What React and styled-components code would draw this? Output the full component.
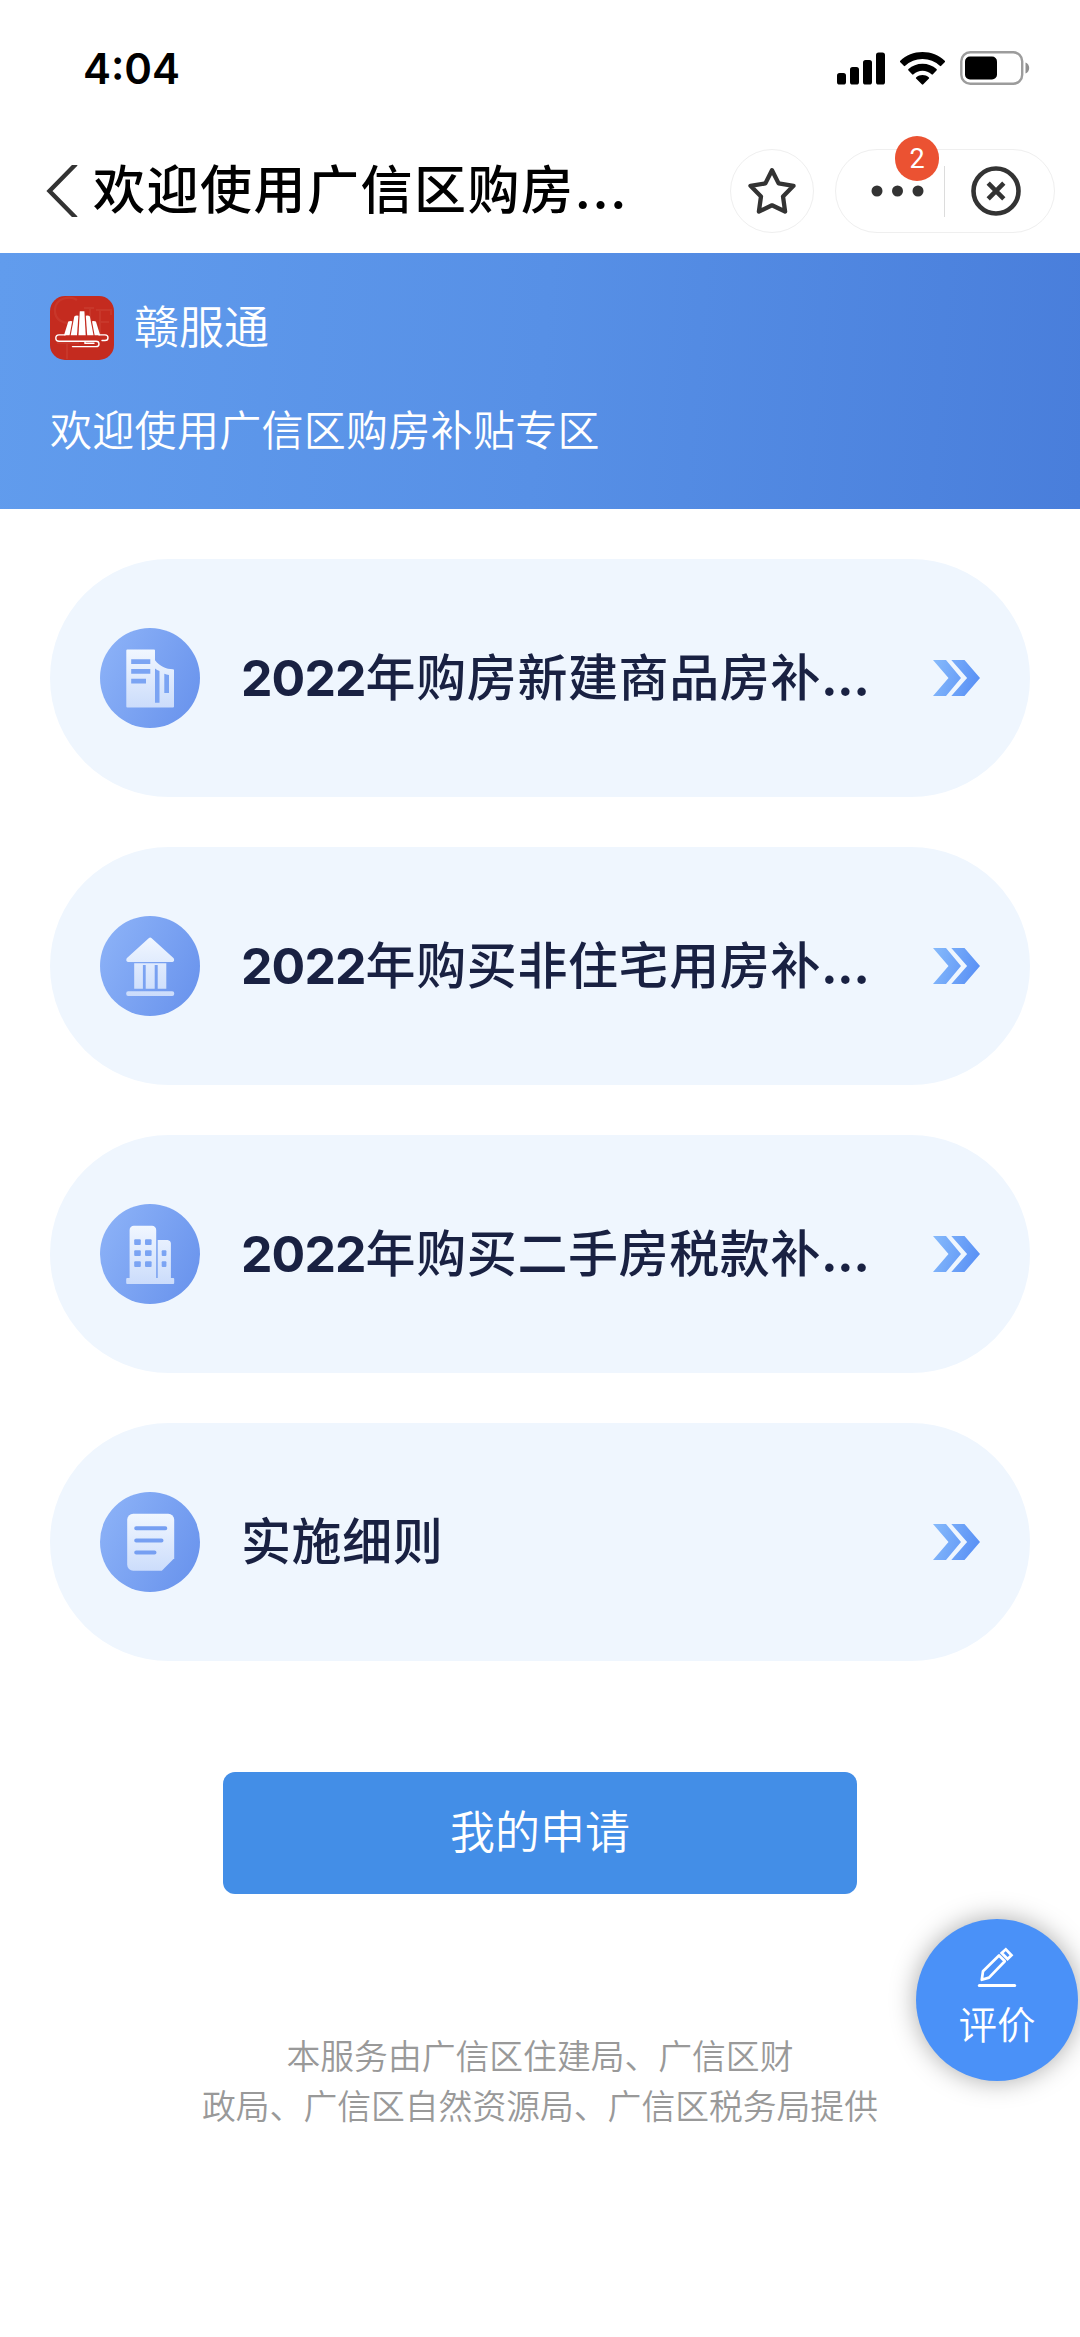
import React from 'react';
import styled, { createGlobalStyle } from 'styled-components';

const GlobalStyle = createGlobalStyle`
  * { box-sizing: border-box; }
  html, body { margin: 0; background: #fff; }
  body { font-family: Inter, "Noto Sans CJK SC", sans-serif; }
  button { font-family: inherit; border: 0; padding: 0; background: none; cursor: pointer; }
  svg { display: block; flex: none; }
`;

const Screen = styled.div`
  position: relative;
  width: 1080px;
  height: 2337px;
  overflow: hidden;
  background: #fff;
`;

const StatusBar = styled.div`
  height: 136px;
  padding: 0 50px 0 83px;
  display: flex;
  align-items: center;
  justify-content: space-between;
`;

const Clock = styled.time`
  padding-top: 2px;
  font-size: 42px;
  font-weight: 600;
  line-height: 50px;
  color: #000;
`;

const StatusIcons = styled.div`
  display: flex;
  align-items: center;
  gap: 15px;
`;

const NavBar = styled.nav`
  height: 117px;
  padding: 0 25px 7px 46px;
  display: flex;
  align-items: center;
`;

const BackButton = styled.button`
  width: 47px;
  display: flex;
`;

const NavTitle = styled.h1`
  margin: 0;
  flex: 1;
  display: flex;
  font-size: 52px;
  font-weight: 500;
  line-height: 76px;
  letter-spacing: 1.5px;
  color: #000;
  white-space: nowrap;
`;

const Ellipsis = styled.span`
  font-family: Inter, sans-serif;
  font-weight: ${(p) => p.$weight};
  letter-spacing: ${(p) => p.$tracking};
`;

const RoundButton = styled.button`
  width: 84px;
  height: 84px;
  border: 1px solid #efefef;
  border-radius: 42px;
  display: flex;
  align-items: center;
  justify-content: center;
`;

const Capsule = styled.div`
  width: 220px;
  height: 84px;
  margin-left: 21px;
  border: 1px solid #efefef;
  border-radius: 42px;
  display: flex;
  align-items: center;
`;

const CapsuleButton = styled.button`
  position: relative;
  width: ${(p) => p.$width};
  height: 82px;
  display: flex;
  align-items: center;
  justify-content: center;
  padding-left: ${(p) => p.$inset || '0'};
  padding-right: ${(p) => p.$outset || '0'};
`;

const CapsuleDivider = styled.span`
  width: 1px;
  height: 51px;
  background: #dcdcdc;
`;

const Badge = styled.span`
  position: absolute;
  top: -14px;
  right: 5px;
  width: 44px;
  height: 45px;
  border-radius: 22px;
  background: #eb5232;
  color: #fff;
  font-family: Roboto, sans-serif;
  font-size: 27px;
  line-height: 47px;
  text-align: center;
`;

const Banner = styled.header`
  height: 256px;
  padding: 43px 50px 0;
  background: linear-gradient(95deg, #619ced 0%, #5790e6 50%, #497edb 100%);
  color: #fff;
`;

const Brand = styled.div`
  height: 64px;
  display: flex;
  align-items: center;
  gap: 20px;
  font-size: 45px;
  font-weight: 350;
  line-height: 64px;
`;

const BannerText = styled.p`
  margin: 39px 0 0;
  font-size: 42px;
  font-weight: 350;
  line-height: 64px;
  letter-spacing: 0.3px;
`;

const CardList = styled.main`
  padding: 50px 50px 0;
  display: flex;
  flex-direction: column;
  gap: 50px;
`;

const Card = styled.section`
  height: 238px;
  border-radius: 119px;
  background: #eff6fe;
  padding: 0 50px;
  display: flex;
  align-items: center;
`;

const CardTitle = styled.h2`
  margin: 0 0 1px 41px;
  flex: 1;
  font-size: 50px;
  font-weight: 500;
  line-height: 70px;
  letter-spacing: 0.6px;
  color: #192142;
  white-space: nowrap;
`;

const Year = styled.span`
  font-weight: 700;
  letter-spacing: ${(p) => p.$tracking};
`;

const ApplyButton = styled.button`
  display: block;
  width: 634px;
  height: 122px;
  margin: 111px auto 0;
  border-radius: 12px;
  background: #438ee7;
  color: #fff;
  font-size: 45px;
  font-weight: 350;
  line-height: 122px;
`;

const Footer = styled.footer`
  margin-top: 138px;
  color: #999;
  font-size: 33.8px;
  font-weight: 350;
  line-height: 50px;
  text-align: center;
`;

const ReviewButton = styled.button`
  position: absolute;
  left: 916px;
  top: 1919px;
  width: 162px;
  height: 162px;
  border-radius: 50%;
  background: #4a91f8;
  box-shadow: 0 0 26px rgba(0, 0, 0, 0.34);
  color: #fff;
  display: flex;
  flex-direction: column;
  align-items: center;
  gap: 9px;
  padding-top: 28px;
  font-size: 38.5px;
  font-weight: 350;
  line-height: 56px;
`;

const SignalIcon = () => (
  <svg width="48" height="33" viewBox="0 0 48 33">
    <rect x="0" y="21" width="9" height="11.5" rx="2.6" />
    <rect x="13" y="15" width="9" height="17.5" rx="2.6" />
    <rect x="26" y="8" width="9" height="24.5" rx="2.6" />
    <rect x="39" y="0.5" width="9" height="32" rx="2.6" />
  </svg>
);

const WifiIcon = () => (
  <svg width="45" height="33" viewBox="0 0 45 33">
    <path d="M22.5 0C31.1 0 38.900 3.3 44.700 8.700a1 1 0 0 1 0 1.500l-3.500 3.600a1 1 0 0 1-1.400 0A25 25 0 0 0 22.500 7A25 25 0 0 0 5.200 13.800a1 1 0 0 1-1.400 0L.3 10.200a1 1 0 0 1 0-1.500C6.100 3.300 13.900 0 22.500 0Z" />
    <path d="M22.500 11.700c5.400 0 10.300 2 14 5.400a1 1 0 0 1 0 1.500L32.900 22.300a1 1 0 0 1-1.400 0a13.200 13.200 0 0 0-18 0a1 1 0 0 1-1.400 0L8.500 18.600a1 1 0 0 1 0-1.500c3.700-3.400 8.600-5.400 14-5.400Z" />
    <path d="M22.500 23.100c2.400 0 4.500.8 6.200 2.200a1 1 0 0 1 0 1.500l-5.400 5.500a1 1 0 0 1-1.500 0l-5.500-5.500a1 1 0 0 1 0-1.500c1.700-1.400 3.800-2.200 6.200-2.200Z" />
  </svg>
);

const BatteryIcon = () => (
  <svg width="70" height="34" viewBox="0 0 70 34">
    <rect x="1.300" y="1.300" width="60.900" height="31.400" rx="9" fill="none" stroke="#9c9c9c" strokeWidth="2.400" />
    <path d="M65.500 11.500c2.200.8 3.700 2.900 3.700 5.500s-1.500 4.700-3.700 5.500Z" fill="#8f8f8f" />
    <rect x="5" y="5.500" width="32" height="23" rx="5" />
  </svg>
);

const BackIcon = () => (
  <svg width="33" height="52" viewBox="0 0 33 52">
    <path d="M30 -1L3.500 26L30 53" fill="none" stroke="#333" strokeWidth="4.400" />
  </svg>
);

const StarIcon = () => (
  <svg width="50" height="50" viewBox="0 0 50 50" fill="none" stroke="#333" strokeWidth="4.300" strokeLinejoin="round">
    <path d="M25 4.200L31.600 17.400L46.500 19.800L36 30.400L38.100 45.500L25 39.300L11.900 45.500L14 30.400L3.500 19.800L18.400 17.400Z" />
  </svg>
);

const MoreIcon = () => (
  <svg width="53" height="12" viewBox="0 0 53 12" fill="#333">
    <circle cx="6" cy="6" r="5.500" />
    <circle cx="26.500" cy="6" r="5.500" />
    <circle cx="47" cy="6" r="5.500" />
  </svg>
);

const CloseIcon = () => (
  <svg width="50" height="50" viewBox="0 0 50 50" fill="none" stroke="#333" strokeWidth="4.600">
    <circle cx="25" cy="25" r="22.500" />
    <path d="M17.200 17.200L32.800 32.800M32.800 17.200L17.200 32.800" />
  </svg>
);

const LogoIcon = () => (
  <svg width="64" height="64" viewBox="0 0 64 64">
    <rect width="64" height="64" rx="15" fill="#c42b1f" />
    <g fill="none" stroke="#d0493c" strokeWidth="2.200" opacity="0.4">
      <path d="M27 4C20 -1 6 2 5 13s9 16 19 13" />
      <path d="M34 12h10M40 12v22M50 14v24M46 14h15v5M50 26h9M7 47h22M17 47v16" />
    </g>
    <g fill="#fff">
      <path d="M29.800 15.200h4.600l1.300 24.100h-7.200Z" />
      <path d="M24.300 20.500q1.500-1.500 4.100-.8L27 39.300h-6.300Z" />
      <path d="M39.900 20.500q-1.500-1.500-4.100-.8L37.200 39.300h6.300Z" />
      <path d="M18.300 25.600q1.600-1.200 3.900-.4L19.600 39.300h-5.600Z" />
      <path d="M45.900 25.600q-1.600-1.200-3.900-.4L44.600 39.300h5.600Z" />
    </g>
    <path
      d="M15 38.900H9a3.200 3.200 0 0 0 0 6.400H46c4 0 4 5.300 0 5.300H22.500M49 38.900h6c4 0 4 5.600 0 5.600H52M35 45.300v1.900h9"
      fill="none"
      stroke="#fff"
      strokeWidth="1.400"
      strokeLinecap="round"
    />
  </svg>
);

const DiscIcon = ({ id, children }) => (
  <svg width="100" height="100" viewBox="0 0 100 100">
    <defs>
      <linearGradient id={`${id}-disc`} x1="0" y1="0.250" x2="1" y2="0.750">
        <stop offset="0" stopColor="#8bb1f7" />
        <stop offset="1" stopColor="#6a94ed" />
      </linearGradient>
      <linearGradient id={`${id}-shape`} gradientUnits="userSpaceOnUse" x1="0" y1="21" x2="0" y2="80">
        <stop offset="0" stopColor="#f1f7ff" />
        <stop offset="1" stopColor="#cbdcfb" />
      </linearGradient>
    </defs>
    <circle cx="50" cy="50" r="50" fill={`url(#${id}-disc)`} />
    {children(`url(#${id}-shape)`)}
  </svg>
);

const OfficeIcon = () => (
  <DiscIcon id="office">
    {(fill) => (
      <>
        <path d="M27.300 21.500H54a1 1 0 0 1 1 1V32.200C60 38.500 66 41 73 41.200a1 1 0 0 1 1 1V78.500a1 1 0 0 1-1 1H27.300a1 1 0 0 1-1-1V22.500a1 1 0 0 1 1-1Z" fill={fill} />
        <path d="M31.200 31.300H50.300V35.900H31.200ZM31.200 41H50.300V45.700H31.200ZM31.200 50.700H46V55.400H31.200ZM55 40.500Q57 42 59.500 43V74.700H55ZM64.300 45.700Q66.500 46.700 69 47V65H64.300Z" fill="#7ba4f3" />
      </>
    )}
  </DiscIcon>
);

const HallIcon = () => (
  <DiscIcon id="hall">
    {(fill) => (
      <g fill={fill}>
        <path d="M48.700 22.200Q50.200 20.800 51.700 22.200L73.700 42.200Q75 45.500 72.500 45.900H28Q25.400 45.500 26.700 42.200Z" />
        <path d="M34.200 47.300H66.300V72.800H57.700V49H54.700V72.800H45.700V49H42.900V72.800H34.200Z" />
        <rect x="26.200" y="75.300" width="48" height="4.600" rx="2" />
      </g>
    )}
  </DiscIcon>
);

const TowerIcon = () => (
  <DiscIcon id="tower">
    {(fill) => (
      <>
        <path d="M33.800 21.700H52a4.200 4.200 0 0 1 4.200 4.200V74H57.700V35.900H67.500Q70.900 36.500 70.900 39.500V74H73.200a1 1 0 0 1 1 1V79a1 1 0 0 1-1 1H27.200a1 1 0 0 1-1-1V75a1 1 0 0 1 1-1H29.600V25.900a4.200 4.200 0 0 1 4.200-4.200Z" fill={fill} />
        <g fill="#7ba4f3">
          {[35.300, 46.300, 57.300].map((y) => (
            <React.Fragment key={y}>
              <rect x="34.200" y={y} width="6.600" height="5.700" rx="1" />
              <rect x="45" y={y} width="6.600" height="5.700" rx="1" />
              {y > 40 && <rect x="61.700" y={y} width="4.700" height="5.700" rx="1" />}
            </React.Fragment>
          ))}
        </g>
      </>
    )}
  </DiscIcon>
);

const DocumentIcon = () => (
  <DiscIcon id="document">
    {(fill) => (
      <>
        <path d="M33.200 21.800H68.200a6 6 0 0 1 6 6V66.200L61.800 78.800H33.200a6 6 0 0 1-6-6V27.800a6 6 0 0 1 6-6Z" fill={fill} />
        <path d="M36.200 36.300H65.300M36.200 48.400H61.500M36.200 60.400H54.500" fill="none" stroke="#769ff2" strokeWidth="4" strokeLinecap="round" />
      </>
    )}
  </DiscIcon>
);

const ChevronsIcon = ({ id }) => (
  <svg width="48" height="36" viewBox="0 0 48 36">
    <defs>
      <linearGradient id={id} gradientUnits="userSpaceOnUse" x1="0" y1="10" x2="48" y2="24">
        <stop offset="0" stopColor="#85b9fb" />
        <stop offset="1" stopColor="#588ff5" />
      </linearGradient>
    </defs>
    <path d="M1 0H14L29 18L14 36H1L16.500 18ZM19.300 0H32.500L48 18L32.500 36H19.300L35.100 18Z" fill={`url(#${id})`} />
  </svg>
);

const PencilIcon = () => (
  <svg width="40" height="41" viewBox="0 0 40 41" fill="none" stroke="#fff" strokeWidth="2.700">
    <path d="M4.800 32.800L6 24.200L22 8.500L27.800 14.300L12 30.600Z" strokeLinejoin="round" />
    <path d="M24.700 6L28.800 2.300L34.500 8.300L30.600 12Z" />
    <path d="M2.300 38.500H37.700" strokeLinecap="round" strokeWidth="3" />
  </svg>
);

const services = [
  { id: 'new', icon: OfficeIcon, year: '2022', title: '年购房新建商品房补', clipped: true },
  { id: 'commercial', icon: HallIcon, year: '2022', title: '年购买非住宅用房补', clipped: true },
  { id: 'resale', icon: TowerIcon, year: '2022', title: '年购买二手房税款补', clipped: true },
  { id: 'rules', icon: DocumentIcon, title: '实施细则' },
];

export default function App() {
  return (
    <Screen>
      <GlobalStyle />
      <StatusBar>
        <Clock>4:04</Clock>
        <StatusIcons>
          <SignalIcon />
          <WifiIcon />
          <BatteryIcon />
        </StatusIcons>
      </StatusBar>
      <NavBar>
        <BackButton aria-label="返回"><BackIcon /></BackButton>
        <NavTitle>
          欢迎使用广信区购房<Ellipsis $weight={600} $tracking="1.2px">...</Ellipsis>
        </NavTitle>
        <RoundButton aria-label="收藏"><StarIcon /></RoundButton>
        <Capsule>
          <CapsuleButton aria-label="更多" $width="108px" $inset="14px">
            <MoreIcon />
            <Badge>2</Badge>
          </CapsuleButton>
          <CapsuleDivider />
          <CapsuleButton aria-label="关闭" $width="109px" $outset="8px"><CloseIcon /></CapsuleButton>
        </Capsule>
      </NavBar>
      <Banner>
        <Brand>
          <LogoIcon />
          赣服通
        </Brand>
        <BannerText>欢迎使用广信区购房补贴专区</BannerText>
      </Banner>
      <CardList>
        {services.map(({ id, icon: Icon, year, title, clipped }) => (
          <Card key={id}>
            <Icon />
            <CardTitle>
              {year && <Year $tracking="-0.9px">{year}</Year>}
              {title}
              {clipped && <Ellipsis $weight={700} $tracking="-0.6px">...</Ellipsis>}
            </CardTitle>
            <ChevronsIcon id={`${id}-chevrons`} />
          </Card>
        ))}
      </CardList>
      <ApplyButton>我的申请</ApplyButton>
      <Footer>
        本服务由广信区住建局、广信区财
        <br />
        政局、广信区自然资源局、广信区税务局提供
      </Footer>
      <ReviewButton>
        <PencilIcon />
        评价
      </ReviewButton>
    </Screen>
  );
}
